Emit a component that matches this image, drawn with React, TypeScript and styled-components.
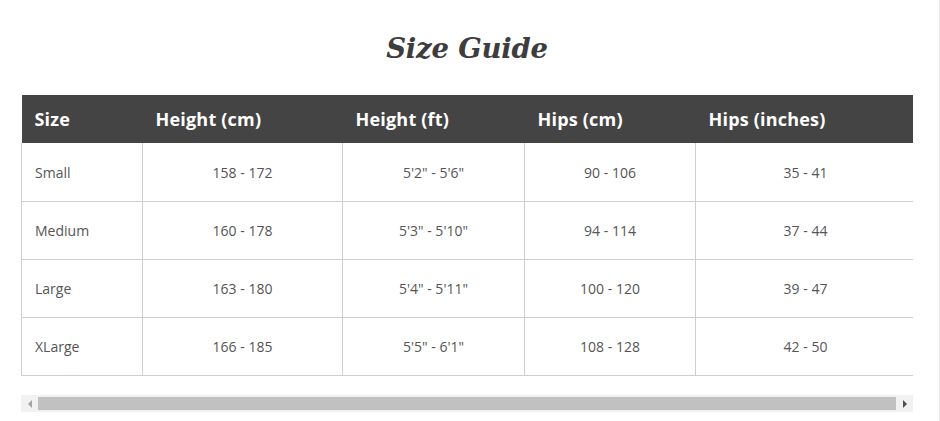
import React from 'react';
import styled, { createGlobalStyle } from 'styled-components';

const GlobalStyle = createGlobalStyle`
  html, body {
    margin: 0;
    padding: 0;
    background: #fff;
  }
  body {
    font-family: 'Open Sans', 'Noto Sans', sans-serif;
  }
`;

interface SizeRow {
  size: string;
  heightCm: string;
  heightFt: string;
  hipsCm: string;
  hipsIn: string;
}

const rows: SizeRow[] = [
  { size: 'Small', heightCm: '158 - 172', heightFt: '5\'2" - 5\'6"', hipsCm: '90 - 106', hipsIn: '35 - 41' },
  { size: 'Medium', heightCm: '160 - 178', heightFt: '5\'3" - 5\'10"', hipsCm: '94 - 114', hipsIn: '37 - 44' },
  { size: 'Large', heightCm: '163 - 180', heightFt: '5\'4" - 5\'11"', hipsCm: '100 - 120', hipsIn: '39 - 47' },
  { size: 'XLarge', heightCm: '166 - 185', heightFt: '5\'5" - 6\'1"', hipsCm: '108 - 128', hipsIn: '42 - 50' },
];

const columns = [
  { label: 'Size', width: 121 },
  { label: 'Height (cm)', width: 200 },
  { label: 'Height (ft)', width: 182 },
  { label: 'Hips (cm)', width: 171 },
  { label: 'Hips (inches)', width: 220 },
];

export default function App() {
  return (
    <>
      <GlobalStyle />
      <Page>
        <Content>
          <Title>Size Guide</Title>
          <TableWrap>
            <Table>
              <colgroup>
                {columns.map((c) => (
                  <col key={c.label} style={{ width: c.width }} />
                ))}
              </colgroup>
              <thead>
                <tr>
                  {columns.map((c) => (
                    <HeadCell key={c.label}>{c.label}</HeadCell>
                  ))}
                </tr>
              </thead>
              <tbody>
                {rows.map((r) => (
                  <BodyRow key={r.size}>
                    <Cell $first>{r.size}</Cell>
                    <Cell>{r.heightCm}</Cell>
                    <Cell>{r.heightFt}</Cell>
                    <Cell>{r.hipsCm}</Cell>
                    <Cell>{r.hipsIn}</Cell>
                  </BodyRow>
                ))}
              </tbody>
            </Table>
          </TableWrap>
          <ScrollBar>
            <ScrollArrow $direction="left" />
            <ScrollThumb />
            <ScrollArrow $direction="right" />
          </ScrollBar>
        </Content>
      </Page>
    </>
  );
}

const Page = styled.div`
  width: 939px;
  height: 421px;
  border-right: 1px solid #ececec;
  box-sizing: content-box;
  overflow: hidden;
`;

const Content = styled.div`
  width: 892px;
  padding: 0 0 0 21px;
  display: flex;
  flex-direction: column;
`;

const Title = styled.h1`
  margin: 0;
  padding: 31px 0 0;
  height: 95px;
  flex: 0 0 95px;
  box-sizing: border-box;
  text-align: center;
  font-family: 'DejaVu Serif', Georgia, serif;
  font-style: italic;
  font-weight: bold;
  font-size: 27.5px;
  line-height: 34px;
  color: #3d3d3d;
  letter-spacing: -0.2px;
`;

const TableWrap = styled.div`
  width: 892px;
  overflow: hidden;
`;

const Table = styled.table`
  width: 894px;
  table-layout: fixed;
  border-collapse: collapse;
`;

const HeadCell = styled.th`
  height: 48px;
  padding: 0 13px;
  background: #444444;
  color: #ffffff;
  font-size: 18px;
  font-weight: 700;
  letter-spacing: 0.2px;
  text-align: left;
  white-space: nowrap;
`;

const BodyRow = styled.tr`
  &:first-child td {
    height: 58px;
  }
`;

const Cell = styled.td<{ $first?: boolean }>`
  height: 57px;
  padding: 0 ${({ $first }) => ($first ? '13px' : '0')};
  border: 1px solid #cfcfcf;
  border-top: none;
  color: #555555;
  font-size: 14px;
  text-align: ${({ $first }) => ($first ? 'left' : 'center')};
`;

const ScrollBar = styled.div`
  margin-top: 19px;
  height: 17px;
  width: 892px;
  background: #f1f1f1;
  display: flex;
  align-items: center;
`;

const ScrollThumb = styled.div`
  flex: 1;
  height: 13px;
  background: #c1c1c1;
`;

const ScrollArrow = styled.div<{ $direction: 'left' | 'right' }>`
  width: 17px;
  height: 17px;
  display: flex;
  align-items: center;
  justify-content: center;

  &::before {
    content: '';
    width: 0;
    height: 0;
    border-top: 4px solid transparent;
    border-bottom: 4px solid transparent;
    ${({ $direction }) =>
      $direction === 'left'
        ? 'border-right: 4px solid #a3a3a3;'
        : 'border-left: 4px solid #505050;'}
  }
`;
